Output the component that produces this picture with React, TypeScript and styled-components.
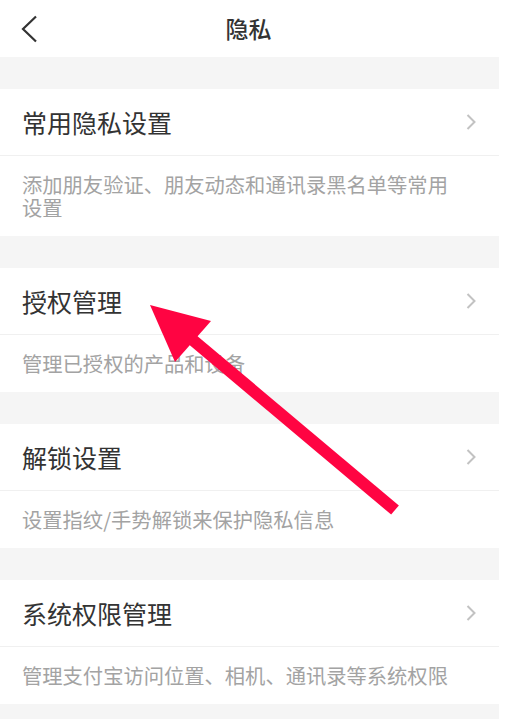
import React from "react";
import styled, { createGlobalStyle } from "styled-components";

const Global = createGlobalStyle`
  html, body { margin: 0; padding: 0; background: #ffffff; }
  body { font-family: "Noto Sans CJK SC", "Noto Sans", sans-serif; }
`;

const Page = styled.div`
  position: relative;
  width: 499px;
  height: 719px;
  overflow: hidden;
  background: #f5f5f5;
`;

const Header = styled.header`
  height: 57px;
  background: #ffffff;
  display: grid;
  grid-template-columns: 60px 1fr 60px;
  align-items: center;
`;

const BackButton = styled.div`
  display: flex;
  align-items: center;
  padding-left: 20px;
  height: 100%;
`;

const Title = styled.h1`
  margin: 0;
  text-align: center;
  font-size: 23px;
  font-weight: 500;
  color: #333333;
  line-height: 57px;
  transform: translateX(-1px);
`;

const Band = styled.div<{ $h?: number }>`
  height: ${(p) => p.$h ?? 32}px;
`;

const Card = styled.section`
  background: #ffffff;
`;

const Row = styled.div`
  height: 66px;
  display: flex;
  align-items: center;
  justify-content: space-between;
  padding: 0 22px;
`;

const RowTitle = styled.span`
  font-size: 25px;
  color: #333333;
  line-height: 1;
`;

const Desc = styled.p`
  margin: 0;
  border-top: 1px solid #f0f0f0;
  padding: 17px 40px 17px 22px;
  font-size: 20.3px;
  line-height: 23px;
  color: #a3a3a3;
`;

const Overlay = styled.svg`
  position: absolute;
  left: 0;
  top: 0;
  pointer-events: none;
`;

const Chevron = () => (
  <svg width="12" height="18" viewBox="0 0 12 18">
    <path d="M2.5 2 L9.5 9 L2.5 16" fill="none" stroke="#c2c2c2" strokeWidth="2" />
  </svg>
);

const BackIcon = () => (
  <svg width="18" height="28" viewBox="0 0 18 28">
    <path d="M16 1.5 L3 14 L16 26.5" fill="none" stroke="#333" strokeWidth="2.2" />
  </svg>
);

const items = [
  { title: "常用隐私设置", desc: "添加朋友验证、朋友动态和通讯录黑名单等常用设置" },
  { title: "授权管理", desc: "管理已授权的产品和设备" },
  { title: "解锁设置", desc: "设置指纹/手势解锁来保护隐私信息" },
  { title: "系统权限管理", desc: "管理支付宝访问位置、相机、通讯录等系统权限" },
];

export default function App() {
  return (
    <>
      <Global />
      <Page>
        <Header>
          <BackButton>
            <BackIcon />
          </BackButton>
          <Title>隐私</Title>
          <span />
        </Header>
        {items.map((it) => (
          <React.Fragment key={it.title}>
            <Band />
            <Card>
              <Row>
                <RowTitle>{it.title}</RowTitle>
                <Chevron />
              </Row>
              <Desc>{it.desc}</Desc>
            </Card>
          </React.Fragment>
        ))}
        <Band $h={40} />
        <Overlay width="499" height="719" viewBox="0 0 499 719">
          <line x1="395" y1="510" x2="188" y2="336" stroke="#ff0442" strokeWidth="12" />
          <polygon points="150,305 211,321 175,362" fill="#ff0442" />
        </Overlay>
      </Page>
    </>
  );
}
